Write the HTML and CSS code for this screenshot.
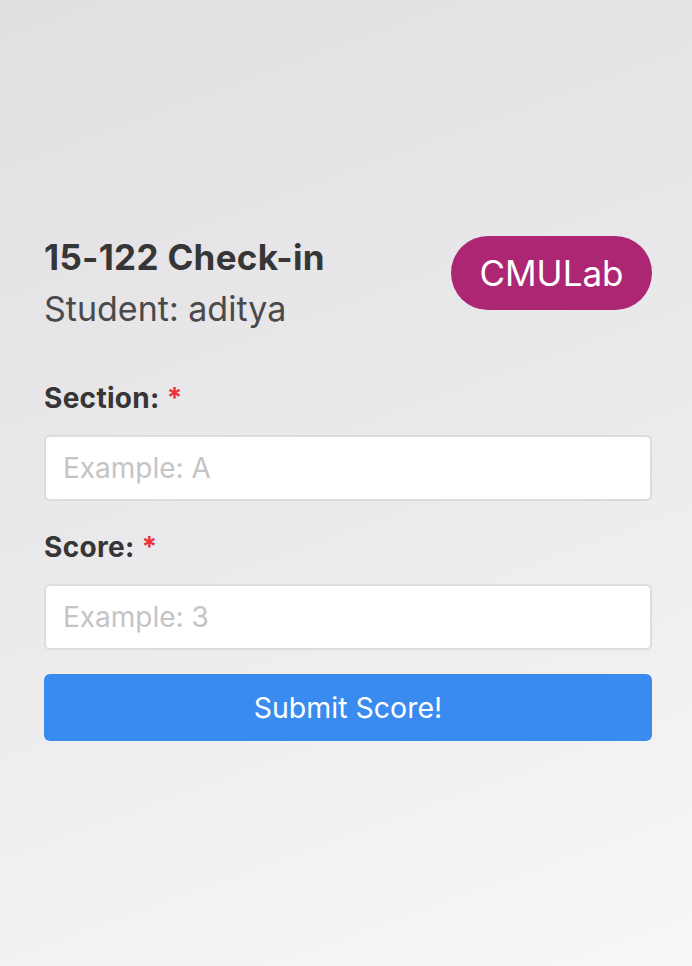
FILE: index.html
```html
<!DOCTYPE html>
<html lang="en">
<head>
<meta charset="utf-8">
<title>15-122 Check-in</title>
<link rel="stylesheet" href="styles.css">
</head>
<body>
<main class="page">
  <header class="header">
    <div class="titles">
      <h1 class="title">15-122 Check-in</h1>
      <p class="subtitle">Student: aditya</p>
    </div>
    <span class="badge">CMULab</span>
  </header>
  <form class="form">
    <div class="field">
      <label class="label" for="section">Section: <span class="req">*</span></label>
      <input class="input" id="section" type="text" placeholder="Example: A">
    </div>
    <div class="field">
      <label class="label" for="score">Score: <span class="req">*</span></label>
      <input class="input" id="score" type="text" placeholder="Example: 3">
    </div>
    <button class="button" type="button">Submit Score!</button>
  </form>
</main>
</body>
</html>
```
FILE: styles.css
```css
html, body {
  margin: 0;
  padding: 0;
}
body {
  min-height: 966px;
  background: linear-gradient(160deg, #e1dfe1 0%, #e9e8ea 45%, #f7f7f9 100%);
  font-family: Inter, Roboto, "Liberation Sans", sans-serif;
  color: #363636;
}
.page {
  padding: 236px 40px 0 44px;
}
.header {
  display: flex;
  justify-content: space-between;
  align-items: flex-start;
}
.titles {
  display: flex;
  flex-direction: column;
}
.title {
  margin: 0;
  font-size: 35px;
  line-height: 42px;
  font-weight: 700;
  letter-spacing: 0.3px;
  color: #363636;
}
.subtitle {
  margin: 10px 0 0;
  font-size: 34px;
  line-height: 42px;
  font-weight: 400;
  color: #4a4a4a;
}
.badge {
  display: flex;
  align-items: center;
  justify-content: center;
  width: 201px;
  height: 74px;
  border-radius: 37px;
  background: #ad2673;
  color: #ffffff;
  font-size: 35px;
  font-weight: 400;
}
.form {
  margin-top: 52px;
  display: flex;
  flex-direction: column;
}
.field {
  display: flex;
  flex-direction: column;
  margin-bottom: 30px;
}
.field:last-of-type {
  margin-bottom: 24px;
}
.label {
  font-size: 28px;
  line-height: 32px;
  font-weight: 700;
  letter-spacing: 0.3px;
  color: #363636;
  margin-bottom: 21px;
}
.req {
  color: #e8343c;
}
.input {
  box-sizing: border-box;
  height: 66px;
  width: 608px;
  border: 2px solid #dcdcdc;
  border-radius: 6px;
  background: #ffffff;
  padding: 0 17px;
  font-family: Inter, Roboto, "Liberation Sans", sans-serif;
  font-size: 28px;
  color: #363636;
  outline: none;
}
.input::placeholder {
  color: #c4c4c6;
}
.button {
  box-sizing: border-box;
  height: 67px;
  width: 608px;
  border: none;
  border-radius: 6px;
  background: #3a8bef;
  color: #ffffff;
  font-family: Inter, Roboto, "Liberation Sans", sans-serif;
  font-size: 28.5px;
  font-weight: 400;
  cursor: pointer;
}
```
